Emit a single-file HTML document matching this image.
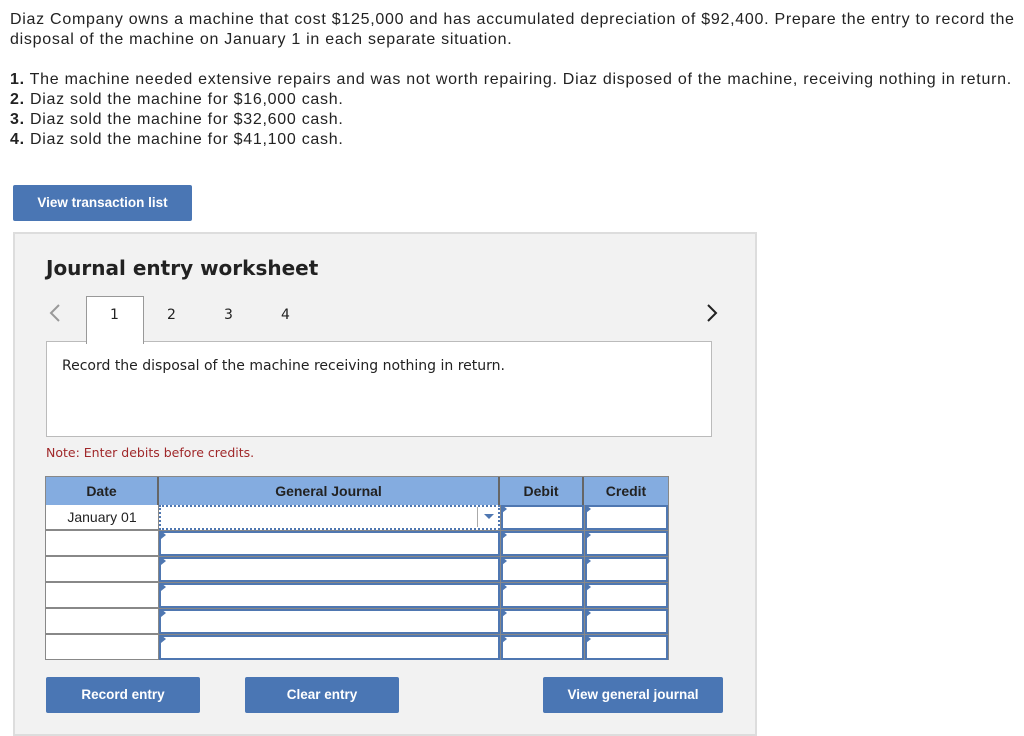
<!DOCTYPE html>
<html><head><style>
body{margin:0;width:1024px;height:722px;background:#fff;font-family:"Liberation Sans",Arial,sans-serif;position:relative;overflow:hidden;color:#222}
.a{position:absolute}
.t{font-size:16px;line-height:20px;letter-spacing:0.72px}
.btn{position:absolute;background:#4a76b4;color:#fff;font-weight:bold;font-size:13.5px;text-align:center;border-radius:2px}
.panel{left:13px;top:232px;width:740px;height:500px;background:#f2f2f2;border:2px solid #ddd}
.cell{position:absolute;background:#fff;box-sizing:border-box}
.hd{position:absolute;background:#84ace0;font-weight:bold;font-size:14px;text-align:center;line-height:28px;color:#222;box-sizing:border-box;border-right:2px solid #666}
.in{position:absolute;background:#fff;border:2px solid #4f77b1;box-sizing:border-box}
.tri{position:absolute;width:0;height:0;border-top:4px solid transparent;border-bottom:4px solid transparent;border-left:5px solid #4f77b1}
</style></head><body>
<div class="a t" style="left:10px;top:10px;width:1024px;white-space:nowrap">Diaz Company owns a machine that cost $125,000 and has accumulated depreciation of $92,400. Prepare the entry to record the<br>disposal of the machine on January 1 in each separate situation.</div>
<div class="a t" style="left:10px;top:70px;white-space:nowrap"><b>1.</b> The machine needed extensive repairs and was not worth repairing. Diaz disposed of the machine, receiving nothing in return.<br><b>2.</b> Diaz sold the machine for $16,000 cash.<br><b>3.</b> Diaz sold the machine for $32,600 cash.<br><b>4.</b> Diaz sold the machine for $41,100 cash.</div>
<div class="btn" style="left:13px;top:185px;width:179px;height:36px;line-height:36px">View transaction list</div>
<div class="a panel"></div>
<div class="a" style="left:46px;top:256px;font-family:'DejaVu Sans',sans-serif;font-weight:bold;font-size:20px">Journal entry worksheet</div>
<svg class="a" style="left:48px;top:303px" width="14" height="20"><path d="M11 2 L3 10 L11 18" stroke="#999" stroke-width="2" fill="none"/></svg>
<svg class="a" style="left:705px;top:303px" width="14" height="20"><path d="M3 2 L11 10 L3 18" stroke="#222" stroke-width="2" fill="none"/></svg>
<div class="a" style="left:46px;top:341px;width:664px;height:94px;background:#fff;border:1px solid #bbb"></div>
<div class="a" style="left:86px;top:296px;width:56px;height:47px;background:#fff;border:1px solid #999;border-bottom:none"></div>
<div class="a" style="left:110px;top:307px;font-size:14px;font-family:'DejaVu Sans',sans-serif">1</div>
<div class="a" style="left:167px;top:307px;font-size:14px;font-family:'DejaVu Sans',sans-serif">2</div>
<div class="a" style="left:224px;top:307px;font-size:14px;font-family:'DejaVu Sans',sans-serif">3</div>
<div class="a" style="left:281px;top:307px;font-size:14px;font-family:'DejaVu Sans',sans-serif">4</div>
<div class="a" style="left:62px;top:358px;font-size:14px;font-family:'DejaVu Sans',sans-serif">Record the disposal of the machine receiving nothing in return.</div>
<div class="a" style="left:46px;top:445px;font-size:12.5px;color:#a0282a;font-family:'DejaVu Sans',sans-serif">Note: Enter debits before credits.</div>
<div class="a" style="left:45px;top:476px;width:624px;height:184px;background:#888"></div>
<div class="hd" style="left:46px;top:477px;width:113px">Date</div>
<div class="hd" style="left:159px;top:477px;width:341px">General Journal</div>
<div class="hd" style="left:500px;top:477px;width:84px">Debit</div>
<div class="hd" style="left:584px;top:477px;width:84px;border-right:none">Credit</div>
<div class="cell" style="left:46px;top:505px;width:112px;height:24px;font-size:14px;line-height:25px;text-align:center">January 01</div>
<div class="cell" style="left:46px;top:531px;width:112px;height:24px"></div>
<div class="cell" style="left:46px;top:557px;width:112px;height:24px"></div>
<div class="cell" style="left:46px;top:583px;width:112px;height:24px"></div>
<div class="cell" style="left:46px;top:609px;width:112px;height:24px"></div>
<div class="cell" style="left:46px;top:635px;width:112px;height:24px"></div>
<div class="cell" style="left:159px;top:505px;width:341px;height:25px;border:2px dotted #4f77b1"></div>
<div class="a" style="left:477px;top:507px;width:1px;height:20px;background:#aaa"></div>
<div class="a" style="left:484px;top:514px;width:0;height:0;border-left:5px solid transparent;border-right:5px solid transparent;border-top:5px solid #4f77b1"></div>
<div class="in" style="left:159px;top:531px;width:341px;height:25px"></div>
<div class="in" style="left:159px;top:557px;width:341px;height:25px"></div>
<div class="in" style="left:159px;top:583px;width:341px;height:25px"></div>
<div class="in" style="left:159px;top:609px;width:341px;height:25px"></div>
<div class="in" style="left:159px;top:635px;width:341px;height:25px"></div>
<div class="in" style="left:501px;top:505px;width:83px;height:25px"></div>
<div class="in" style="left:501px;top:531px;width:83px;height:25px"></div>
<div class="in" style="left:501px;top:557px;width:83px;height:25px"></div>
<div class="in" style="left:501px;top:583px;width:83px;height:25px"></div>
<div class="in" style="left:501px;top:609px;width:83px;height:25px"></div>
<div class="in" style="left:501px;top:635px;width:83px;height:25px"></div>
<div class="in" style="left:585px;top:505px;width:83px;height:25px"></div>
<div class="in" style="left:585px;top:531px;width:83px;height:25px"></div>
<div class="in" style="left:585px;top:557px;width:83px;height:25px"></div>
<div class="in" style="left:585px;top:583px;width:83px;height:25px"></div>
<div class="in" style="left:585px;top:609px;width:83px;height:25px"></div>
<div class="in" style="left:585px;top:635px;width:83px;height:25px"></div>
<div class="tri" style="left:161px;top:531px"></div><div class="tri" style="left:161px;top:557px"></div><div class="tri" style="left:161px;top:583px"></div><div class="tri" style="left:161px;top:609px"></div><div class="tri" style="left:161px;top:635px"></div>
<div class="tri" style="left:502px;top:505px"></div><div class="tri" style="left:502px;top:531px"></div><div class="tri" style="left:502px;top:557px"></div><div class="tri" style="left:502px;top:583px"></div><div class="tri" style="left:502px;top:609px"></div><div class="tri" style="left:502px;top:635px"></div>
<div class="tri" style="left:586px;top:505px"></div><div class="tri" style="left:586px;top:531px"></div><div class="tri" style="left:586px;top:557px"></div><div class="tri" style="left:586px;top:583px"></div><div class="tri" style="left:586px;top:609px"></div><div class="tri" style="left:586px;top:635px"></div>
<div class="btn" style="left:46px;top:677px;width:154px;height:36px;line-height:36px">Record entry</div>
<div class="btn" style="left:245px;top:677px;width:154px;height:36px;line-height:36px">Clear entry</div>
<div class="btn" style="left:543px;top:677px;width:180px;height:36px;line-height:36px">View general journal</div>
</body></html>
